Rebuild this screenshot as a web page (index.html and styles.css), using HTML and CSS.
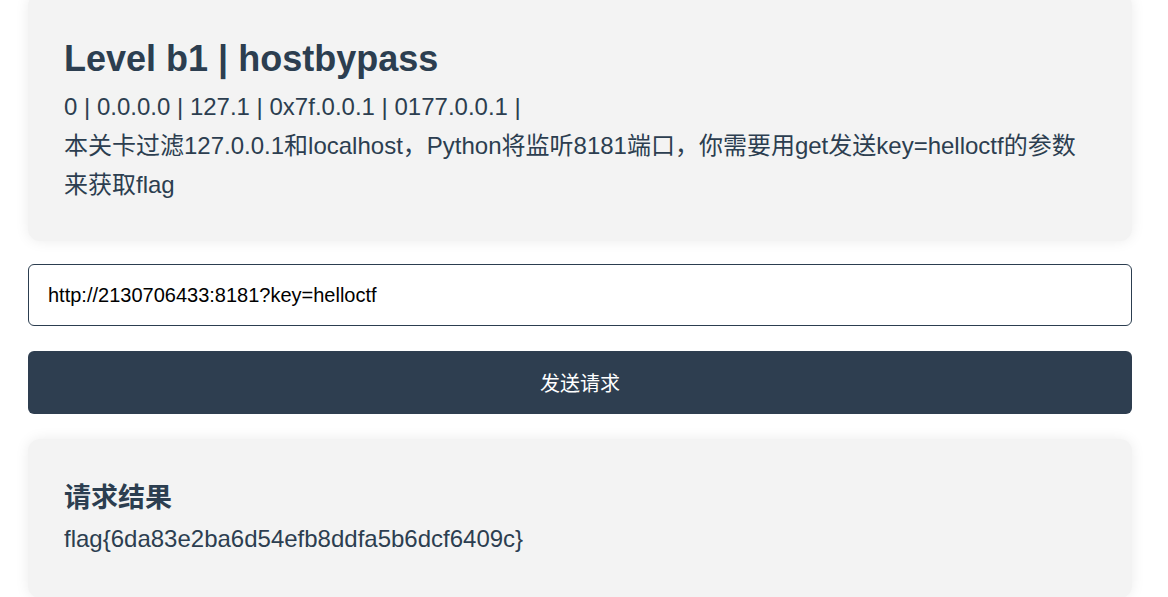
FILE: index.html
```html
<!DOCTYPE html>
<html lang="zh-CN">
<head>
<meta charset="utf-8">
<title>Level b1 | hostbypass</title>
<link rel="stylesheet" href="styles.css">
</head>
<body>
<main class="container">
  <section class="card intro">
    <h1 class="title">Level b1 | hostbypass</h1>
    <p class="desc">0 | 0.0.0.0 | 127.1 | 0x7f.0.0.1 | 0177.0.0.1 |</p>
    <p class="desc">本关卡过滤127.0.0.1和localhost，Python将监听8181端口，你需要用get发送key=helloctf的参数来获取flag</p>
  </section>
  <form class="form">
    <input class="url-input" type="text" value="http://2130706433:8181?key=helloctf">
    <button class="send-btn" type="button">发送请求</button>
  </form>
  <section class="card result">
    <h3 class="result-title">请求结果</h3>
    <p class="desc">flag{6da83e2ba6d54efb8ddfa5b6dcf6409c}</p>
  </section>
</main>
</body>
</html>
```

FILE: styles.css
```css
html, body {
  margin: 0;
  padding: 0;
  background: #ffffff;
}
body {
  font-family: "Liberation Sans", Arial, "Noto Sans CJK SC", sans-serif;
  color: #2c3e50;
  overflow: hidden;
}
.container {
  width: 1104px;
  margin: -6px 28px 0 28px;
  display: flex;
  flex-direction: column;
}
.card {
  background: #f3f3f3;
  border-radius: 12px;
  box-shadow: 0 0 14px rgba(0, 0, 0, 0.08);
  padding: 36px;
}
.intro {
  padding-top: 43px;
  padding-bottom: 37px;
}
.title {
  margin: 0 0 6px 0;
  font-size: 36px;
  line-height: 44px;
  font-weight: bold;
  color: #2c3e50;
}
.desc {
  margin: 0;
  font-size: 24px;
  line-height: 39px;
  color: #2c3e50;
}
.form {
  display: flex;
  flex-direction: column;
  margin: 23px 0 25px 0;
  gap: 25px;
}
.url-input {
  box-sizing: border-box;
  height: 62px;
  width: 100%;
  margin: 0;
  padding: 0 19px;
  border: 1px solid #2c3e50;
  border-radius: 6px;
  background: #ffffff;
  font-family: "Liberation Sans", Arial, sans-serif;
  font-size: 20px;
  color: #000000;
  outline: none;
}
.send-btn {
  height: 63px;
  width: 100%;
  margin: 0;
  border: none;
  border-radius: 6px;
  background: #2e3e50;
  color: #ffffff;
  font-family: "Liberation Sans", Arial, "Noto Sans CJK SC", sans-serif;
  font-size: 20px;
}
.result {
  padding-top: 39px;
  padding-bottom: 40px;
}
.result-title {
  margin: 0 0 1px 0;
  font-size: 27px;
  line-height: 40px;
  font-weight: bold;
  color: #2c3e50;
}
```
